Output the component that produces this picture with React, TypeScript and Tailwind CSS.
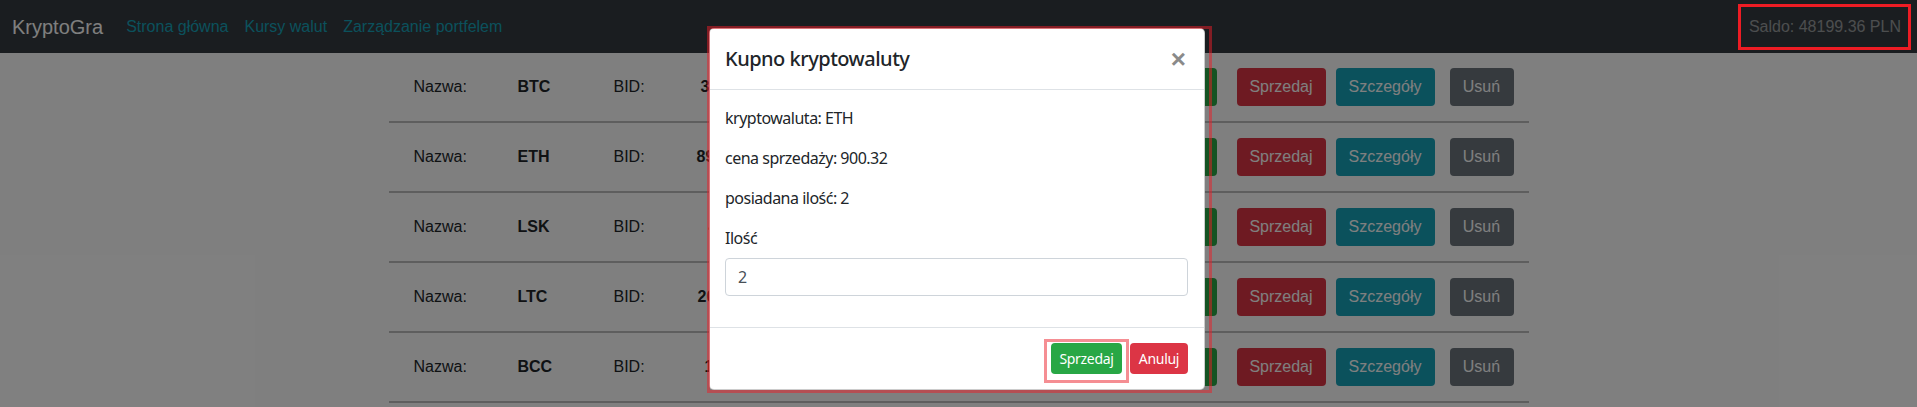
import React from 'react';

const rows = [
  { name: 'BTC', bid: '34512.20', ask: '34890.10', pad: 'pl-[10px]' },
  { name: 'ETH', bid: '899.75', ask: '900.32', pad: 'pl-[6px]' },
  { name: 'LSK', bid: '45.10', ask: '46.02', pad: 'pl-[18px]' },
  { name: 'LTC', bid: '204.60', ask: '207.15', pad: 'pl-[7px]' },
  { name: 'BCC', bid: '1120.40', ask: '1131.90', pad: 'pl-[14px]' },
];

const arial = "font-['Liberation_Sans',Arial,sans-serif]";
const modalFont = "font-['Noto_Sans','Open_Sans',sans-serif]";

const Navbar = () => (
  <nav className={`h-[53px] bg-[#343a40] flex items-center pl-3 pr-4 ${arial}`}>
    <span className="text-[20px] text-white mr-[15px]">KryptoGra</span>
    <a className="px-2 text-[16px] text-[#17a2b8]">Strona główna</a>
    <a className="px-2 text-[16px] text-[#17a2b8]">Kursy walut</a>
    <a className="px-2 text-[16px] text-[#17a2b8]">Zarządzanie portfelem</a>
    <span className="ml-auto text-[16px] text-white/50">Saldo: 48199.36 PLN</span>
  </nav>
);

const Row = ({ name, bid, ask, pad }: { name: string; bid: string; ask: string; pad: string }) => (
  <div className={`h-[70px] flex items-center border-b-2 border-[#bcbcbc] pl-[25px] pr-[15px] text-[16px] text-[#212529] ${arial}`}>
    <span className="w-[104px]">Nazwa:</span>
    <span className="w-[96px] font-bold">{name}</span>
    <span className="w-[77px]">BID:</span>
    <span className={`w-[130px] font-bold ${pad}`}>{bid}</span>
    <span className="w-[87px]">ASK:</span>
    <span className="font-bold">{ask}</span>
    <button className="ml-auto h-[38px] px-3 rounded bg-[#28a745] text-white">Kup</button>
    <button className="ml-5 w-[89px] h-[38px] rounded bg-[#dc3545] text-white">Sprzedaj</button>
    <button className="ml-[10px] w-[99px] h-[38px] rounded bg-[#17a2b8] text-white">Szczegóły</button>
    <button className="ml-[15px] w-[64px] h-[38px] rounded bg-[#6c757d] text-white">Usuń</button>
  </div>
);

const Modal = () => (
  <div className={`w-[496px] h-[362px] bg-white border border-black/20 rounded-[5px] flex flex-col text-[#212529] ${modalFont}`}>
    <div className="h-[61px] flex items-center justify-between pl-[15px] pr-4 border-b border-[#dee2e6]">
      <h5 className="text-[20px] font-medium leading-[30px] tracking-[-0.5px]">Kupno kryptowaluty</h5>
      <span className={`text-[26px] font-bold text-[#8a8a8a] leading-none pr-[2px] ${arial}`}>×</span>
    </div>
    <div className="pl-[15px] pr-4 pt-4 text-[16px] leading-6 tracking-[-0.5px]">
      <p className="mb-4">kryptowaluta: ETH</p>
      <p className="mb-4">cena sprzedaży: 900.32</p>
      <p className="mb-4">posiadana ilość: 2</p>
      <label className="block mb-2">Ilość</label>
      <div className="h-[38px] border border-[#ced4da] rounded flex items-center px-3 text-[#495057]">2</div>
    </div>
    <div className="mt-auto h-[62px] border-t border-[#dee2e6] flex items-center justify-end gap-2 px-4">
      <button className="h-[31px] w-[71px] rounded bg-[#28a745] text-white text-[14px] tracking-[-0.3px]">Sprzedaj</button>
      <button className="h-[31px] w-[58px] rounded bg-[#dc3545] text-white text-[14px] tracking-[-0.3px]">Anuluj</button>
    </div>
  </div>
);

export default function App() {
  return (
    <div className="relative w-full h-[407px] overflow-hidden bg-white">
      <Navbar />
      <div className="w-[1140px] mx-auto">
        {rows.map((r) => (
          <Row key={r.name} {...r} />
        ))}
      </div>

      {/* modal backdrop */}
      <div className="absolute inset-0 bg-black/50 flex justify-center pt-[28px] pr-[3px]">
        <Modal />
      </div>

      {/* annotation boxes */}
      <div className="absolute left-[1738px] top-[4px] w-[173px] h-[46px] border-[3px] border-[#ed1c24]" />
      <div className="absolute left-[707px] top-[26px] w-[505px] h-[367px] border-[3px] border-[rgba(235,30,40,0.5)]" />
      <div className="absolute left-[1044px] top-[339px] w-[85px] h-[44px] border-[3px] border-[rgba(235,30,40,0.5)]" />
    </div>
  );
}
